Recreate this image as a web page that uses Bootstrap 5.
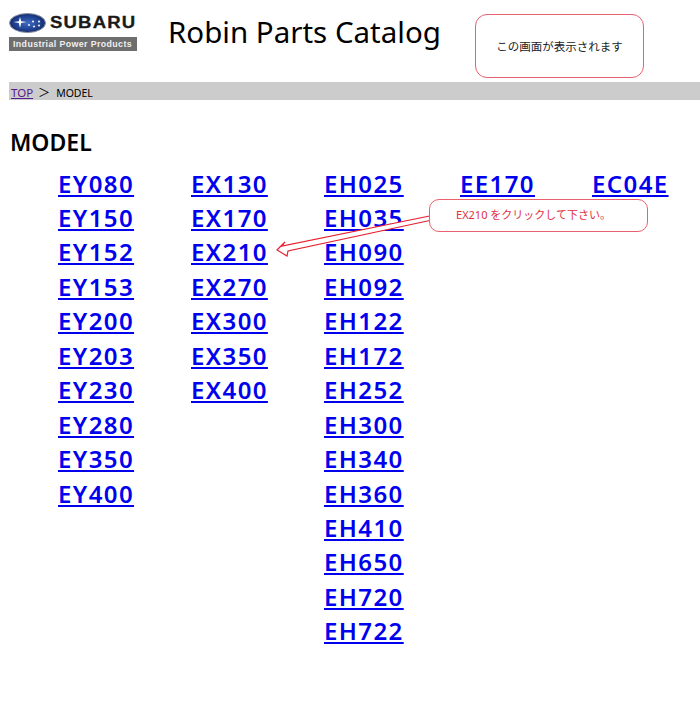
<!DOCTYPE html>
<html lang="en">

<head>
    <meta charset="UTF-8" />
    <title>Robin Parts Catalog</title>
    <link href="https://cdn.jsdelivr.net/npm/bootstrap@5.3.7/dist/css/bootstrap.min.css" rel="stylesheet" />
    <style>
        body {
            position: relative;
            height: 722px;
            overflow: hidden;
            font-family: "Noto Sans", "Noto Sans CJK JP", sans-serif;
            color: #000;
            background: #fff;
        }

        .page-head {
            height: 82px;
            padding-left: 9px;
        }

        .brand-box {
            width: 128px;
            margin-top: 13px;
        }

        .brand-name {
            font-family: "Liberation Sans", sans-serif;
            font-weight: 700;
            font-size: 16px;
            line-height: 1;
            color: #1a1a1a;
            letter-spacing: 1px;
            transform: scaleX(1.16);
            transform-origin: left;
            -webkit-text-stroke: .3px #1a1a1a;
        }

        .brand-sub {
            font-family: "Liberation Sans", sans-serif;
            font-weight: 700;
            font-size: 8.8px;
            line-height: 14px;
            height: 14px;
            letter-spacing: .4px;
            background: #6e6e6e;
            color: #eee;
            padding-left: 4px;
            margin-top: 4px;
            white-space: nowrap;
        }

        .site-title {
            font-size: 29.5px;
            font-weight: 400;
            line-height: 40px;
            margin: 12px 0 0 31px;
            white-space: nowrap;
        }

        .crumb-bar {
            margin-left: 9px;
            height: 18px;
            background: #ccc;
            font-size: 10.5px;
            line-height: 21px;
            padding-left: 2px;
        }

        .crumb-bar a {
            color: #551a8b;
            font-size: 11.5px;
        }

        .crumb-sep {
            margin: 0 6px 0 5px;
            font-size: 12px;
        }

        .section-title {
            font-size: 23px;
            font-weight: 600;
            line-height: 30px;
            margin: 27px 0 0 10px;
        }

        .model-cols {
            margin-top: 9.5px;
            padding-left: 58px;
        }

        .model-col a {
            display: block;
            height: 34.46px;
            font-size: 24px;
            font-weight: 600;
            line-height: 34.46px;
            letter-spacing: 1.4px;
            color: #00e;
            white-space: nowrap;
        }

        .col-ey { width: 133px; }
        .col-ex { width: 133px; }
        .col-eh { width: 136px; }
        .col-ee { width: 132px; }

        .note-box {
            position: absolute;
            background: #fff;
            border: 1.5px solid #e9606f;
            text-align: center;
        }

        .note-screen {
            left: 475px;
            top: 14px;
            width: 169px;
            height: 64px;
            border-radius: 12px;
            font-size: 11.5px;
            line-height: 63px;
            color: #222;
        }

        .note-click {
            left: 429px;
            top: 199px;
            width: 219px;
            height: 33px;
            padding-right: 10px;
            border-radius: 10px;
            font-size: 11px;
            line-height: 29px;
            color: #e0303f;
        }

        .note-arrow {
            position: absolute;
            left: 270px;
            top: 205px;
            width: 165px;
            height: 55px;
        }
    </style>
</head>

<body>

    <header class="page-head d-flex align-items-start">
        <div class="brand-box">
            <div class="d-flex align-items-center gap-1">
                <svg width="37" height="20" viewBox="0 0 37 20">
                    <defs>
                        <radialGradient id="badge" cx=".5" cy=".5" r=".55">
                            <stop offset="0" stop-color="#3f6cc4" />
                            <stop offset=".7" stop-color="#1d3c8c" />
                            <stop offset="1" stop-color="#14234f" />
                        </radialGradient>
                    </defs>
                    <ellipse cx="18.500" cy="10" rx="18" ry="9.500" fill="url(#badge)" stroke="#8a93a8" stroke-width="1" />
                    <path d="M11 4l1.200 4.200 5.300 .8-5.300 1-1.200 5-1.200-5-5.300-1 5.300-.8z" fill="#fff" />
                    <g fill="#e6ebf5">
                        <circle cx="20" cy="12" r="1.100" />
                        <circle cx="24" cy="8.500" r="1.100" />
                        <circle cx="30" cy="8.500" r="1.100" />
                        <circle cx="25" cy="13.500" r="1.100" />
                        <circle cx="30" cy="12.500" r="1.100" />
                    </g>
                </svg>
                <div class="brand-name">SUBARU</div>
            </div>
            <div class="brand-sub">Industrial Power Products</div>
        </div>
        <h1 class="site-title">Robin Parts Catalog</h1>
    </header>

    <div class="crumb-bar"><a href="#">TOP</a><span class="crumb-sep">＞</span>MODEL</div>

    <h2 class="section-title">MODEL</h2>

    <div class="model-cols d-flex align-items-start">
        <div class="model-col col-ey">
            <a href="#">EY080</a>
            <a href="#">EY150</a>
            <a href="#">EY152</a>
            <a href="#">EY153</a>
            <a href="#">EY200</a>
            <a href="#">EY203</a>
            <a href="#">EY230</a>
            <a href="#">EY280</a>
            <a href="#">EY350</a>
            <a href="#">EY400</a>
        </div>
        <div class="model-col col-ex">
            <a href="#">EX130</a>
            <a href="#">EX170</a>
            <a href="#">EX210</a>
            <a href="#">EX270</a>
            <a href="#">EX300</a>
            <a href="#">EX350</a>
            <a href="#">EX400</a>
        </div>
        <div class="model-col col-eh">
            <a href="#">EH025</a>
            <a href="#">EH035</a>
            <a href="#">EH090</a>
            <a href="#">EH092</a>
            <a href="#">EH122</a>
            <a href="#">EH172</a>
            <a href="#">EH252</a>
            <a href="#">EH300</a>
            <a href="#">EH340</a>
            <a href="#">EH360</a>
            <a href="#">EH410</a>
            <a href="#">EH650</a>
            <a href="#">EH720</a>
            <a href="#">EH722</a>
        </div>
        <div class="model-col col-ee">
            <a href="#">EE170</a>
        </div>
        <div class="model-col">
            <a href="#">EC04E</a>
        </div>
    </div>

    <div class="note-box note-screen">この画面が表示されます</div>

    <svg class="note-arrow" viewBox="0 0 165 55">
        <path d="M162 10.500L12 41L15 37L7 45L17 51L18 46L162 15" fill="#fff" stroke="#e8202f" stroke-width="1.200" />
    </svg>
    <div class="note-box note-click">EX210 をクリックして下さい。</div>

</body>

</html>
